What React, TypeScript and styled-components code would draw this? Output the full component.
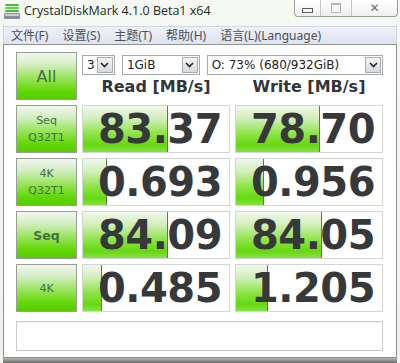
import React from 'react'
import styled, { createGlobalStyle } from 'styled-components'

const GlobalStyle = createGlobalStyle`
  html, body {
    margin: 0;
    padding: 0;
    background: #ffffff;
  }
`

interface Result {
  label: string[]
  bold?: boolean
  read: string
  readBar: number
  write: string
  writeBar: number
}

const results: Result[] = [
  { label: ['Seq', 'Q32T1'], read: '83.37', readBar: 85, write: '78.70', writeBar: 84 },
  { label: ['4K', 'Q32T1'], read: '0.693', readBar: 24, write: '0.956', writeBar: 28 },
  { label: ['Seq'], bold: true, read: '84.09', readBar: 85, write: '84.05', writeBar: 86 },
  { label: ['4K'], read: '0.485', readBar: 19, write: '1.205', writeBar: 32 },
]

const menus = ['文件(F)', '设置(S)', '主题(T)', '帮助(H)', '语言(L)(Language)']

const AppIcon = () => (
  <svg width="16" height="15" viewBox="0 0 16 15">
    <rect x="1" y="0" width="14" height="2" rx="1" fill="#3fbf3a" />
    <rect x="1" y="3" width="14" height="2" rx="1" fill="#5ed24a" />
    <rect x="1" y="6" width="14" height="2" rx="1" fill="#3fbf3a" />
    <rect x="0" y="9" width="16" height="6" rx="1" fill="#8c9096" />
    <rect x="1" y="10" width="14" height="2" fill="#c9ccd0" />
  </svg>
)

const Arrow = () => (
  <svg width="9" height="6" viewBox="0 0 9 6">
    <path d="M1 1 L4.5 4.5 L8 1" stroke="#1e2a3a" strokeWidth="1.6" fill="none" />
  </svg>
)

const Dropdown: React.FC<{ value: string; width: number }> = ({ value, width }) => (
  <StyledSelect style={{ width }}>
    <SelectText>{value}</SelectText>
    <SelectButton>
      <Arrow />
    </SelectButton>
  </StyledSelect>
)

const ScoreCell: React.FC<{ value: string; bar: number }> = ({ value, bar }) => (
  <StyledCell>
    <StyledBar style={{ width: bar }} />
    <StyledScore>{value}</StyledScore>
  </StyledCell>
)

const App: React.FC = () => {
  return (
    <>
      <GlobalStyle />
      <StyledWindow>
        <StyledTitleBar>
          <AppIcon />
          <StyledTitle>CrystalDiskMark 4.1.0 Beta1 x64</StyledTitle>
          <StyledCaption>
            <CaptionButton w={25}>
              <MinGlyph />
            </CaptionButton>
            <CaptionButton w={30}>
              <MaxGlyph />
            </CaptionButton>
            <CaptionButton w={45} last>
              <CloseGlyph>✕</CloseGlyph>
            </CaptionButton>
          </StyledCaption>
        </StyledTitleBar>
        <StyledMenuBar>
          {menus.map((m) => (
            <StyledMenuItem key={m}>{m}</StyledMenuItem>
          ))}
        </StyledMenuBar>
        <StyledClient>
          <StyledGrid>
            <StyledLabel big>All</StyledLabel>
            <StyledControls>
              <StyledSelectRow>
                <Dropdown value="3" width={33} />
                <Dropdown value="1GiB" width={78} />
                <Dropdown value="O: 73% (680/932GiB)" width={177} />
              </StyledSelectRow>
              <StyledHeaderRow>
                <StyledHeader>Read [MB/s]</StyledHeader>
                <StyledHeader>Write [MB/s]</StyledHeader>
              </StyledHeaderRow>
            </StyledControls>
            {results.map((r) => (
              <React.Fragment key={r.label.join(' ') + r.read}>
                <StyledLabel bold={r.bold}>
                  {r.label.map((l) => (
                    <span key={l}>{l}</span>
                  ))}
                </StyledLabel>
                <ScoreCell value={r.read} bar={r.readBar} />
                <ScoreCell value={r.write} bar={r.writeBar} />
              </React.Fragment>
            ))}
            <StyledComment />
          </StyledGrid>
        </StyledClient>
        <StyledShadow />
      </StyledWindow>
    </>
  )
}

const StyledWindow = styled.div`
  width: 400px;
  height: 363px;
  display: flex;
  flex-direction: column;
  background: linear-gradient(to bottom, #f6f8f3, #eef1ec);
  overflow: hidden;
`

const StyledTitleBar = styled.div`
  height: 26px;
  display: flex;
  align-items: flex-start;
  padding-left: 4px;
  padding-top: 3px;
  box-sizing: border-box;
  svg {
    margin-top: 1px;
  }
`

const StyledTitle = styled.div`
  font-family: 'Open Sans', 'Noto Sans', sans-serif;
  font-size: 12.5px;
  color: #1f2a24;
  margin-left: 4px;
  line-height: 16px;
`

const StyledCaption = styled.div`
  margin-left: auto;
  margin-right: 2px;
  margin-top: -3px;
  height: 16px;
  display: flex;
  border: 1px solid #9a9e9a;
  border-top: none;
  border-radius: 0 0 4px 4px;
  background: linear-gradient(to bottom, #ffffff, #eef0ee);
  overflow: hidden;
`

const CaptionButton = styled.div<{ w: number; last?: boolean }>`
  width: ${(p) => p.w}px;
  height: 100%;
  display: flex;
  align-items: center;
  justify-content: center;
  border-right: ${(p) => (p.last ? 'none' : '1px solid #c4c8c4')};
`

const MinGlyph = styled.div`
  width: 9px;
  height: 3px;
  border: 1px solid #5a5e62;
  margin-top: 4px;
`

const MaxGlyph = styled.div`
  width: 8px;
  height: 7px;
  border: 1px solid #b4b8bc;
  border-top-width: 2px;
`

const CloseGlyph = styled.span`
  font-family: 'DejaVu Sans', sans-serif;
  font-size: 12px;
  color: #6a6e72;
  line-height: 1;
`

const StyledMenuBar = styled.div`
  height: 18px;
  margin: 0 3px;
  display: flex;
  align-items: center;
  gap: 14px;
  padding-left: 7px;
  background: linear-gradient(to bottom, #eef1f8, #dde3f0);
  border: 1px solid #d2d7e2;
  border-bottom: none;
  box-sizing: border-box;
`

const StyledMenuItem = styled.span`
  font-family: 'Noto Sans', 'Noto Sans CJK SC', sans-serif;
  font-size: 12px;
  color: #4a4f58;
  line-height: 16px;
`

const StyledClient = styled.div`
  height: 314px;
  margin: 0 3px;
  box-sizing: border-box;
  border: 1px solid #8f9490;
  background: #ffffff;
  padding: 7px 12px 0 12px;
`

const StyledGrid = styled.div`
  display: grid;
  grid-template-columns: 61px 148px 148px;
  grid-auto-rows: 48px;
  column-gap: 5px;
  row-gap: 5px;
`

const StyledLabel = styled.div<{ big?: boolean; bold?: boolean }>`
  box-sizing: border-box;
  border: 1px solid #98a096;
  background: linear-gradient(
    to bottom,
    #f2f6ef 0%,
    #d4eec4 25%,
    #97e45a 55%,
    #63d808 82%,
    #57cc00 100%
  );
  display: flex;
  flex-direction: column;
  align-items: center;
  justify-content: center;
  font-family: 'DejaVu Sans', sans-serif;
  font-size: ${(p) => (p.big ? '16px' : p.bold ? '12.5px' : '11px')};
  font-weight: ${(p) => (p.bold ? 700 : 400)};
  color: #46703c;
  line-height: 17px;
`

const StyledControls = styled.div`
  grid-column: 2 / 4;
  display: flex;
  flex-direction: column;
`

const StyledSelectRow = styled.div`
  display: flex;
  gap: 7px;
  margin-top: 3px;
  height: 20px;
`

const StyledSelect = styled.div`
  box-sizing: border-box;
  border: 1px solid #a5aaa8;
  background: #ffffff;
  display: flex;
  align-items: stretch;
  padding: 1px;
`

const SelectText = styled.span`
  flex: 1;
  font-family: 'DejaVu Sans', sans-serif;
  font-size: 12px;
  color: #222;
  line-height: 16px;
  padding-left: 3px;
  white-space: nowrap;
  overflow: hidden;
`

const SelectButton = styled.div`
  width: 16px;
  box-sizing: border-box;
  border: 1px solid #a8acb0;
  background: linear-gradient(to bottom, #f4f4f4, #d8dadc);
  display: flex;
  align-items: center;
  justify-content: center;
`

const StyledHeaderRow = styled.div`
  flex: 1;
  display: grid;
  grid-template-columns: 148px 148px;
  column-gap: 5px;
  align-items: center;
`

const StyledHeader = styled.div`
  text-align: center;
  font-family: 'DejaVu Sans', sans-serif;
  font-weight: 700;
  font-size: 16px;
  color: #333638;
  padding-bottom: 2px;
`

const StyledCell = styled.div`
  position: relative;
  box-sizing: border-box;
  border: 1px solid #d4d6d4;
  background: #ffffff;
  display: flex;
  align-items: center;
  justify-content: flex-end;
  padding-right: 7px;
  overflow: hidden;
`

const StyledBar = styled.div`
  position: absolute;
  left: 0;
  top: 0;
  bottom: 0;
  box-sizing: border-box;
  border-right: 1px solid #5c7a52;
  background: linear-gradient(
    to bottom,
    #f2f7ee 0%,
    #cdeeb4 30%,
    #8ee447 60%,
    #66d810 85%,
    #86e246 100%
  );
`

const StyledScore = styled.span`
  position: relative;
  font-family: 'DejaVu Sans', sans-serif;
  font-weight: 700;
  font-size: 40px;
  line-height: 1;
  color: #36383a;
  letter-spacing: -0.5px;
`

const StyledComment = styled.div`
  grid-column: 1 / 4;
  height: 30px;
  margin-top: 4px;
  box-sizing: border-box;
  border: 1px solid #c8cac8;
  background: #ffffff;
  box-shadow: inset 0 1px 1px rgba(0, 0, 0, 0.05);
`

const StyledShadow = styled.div`
  flex: 1;
  margin: 0 3px;
  background: linear-gradient(to bottom, #b4b6b4, #6a6c6a);
`

export default App
